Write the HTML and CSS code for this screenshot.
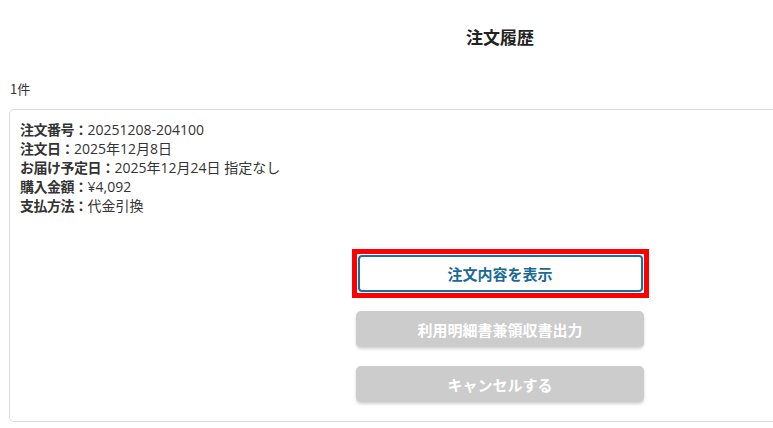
FILE: index.html
```html
<!DOCTYPE html>
<html lang="ja">
<head>
<meta charset="utf-8">
<title>注文履歴</title>
<link rel="stylesheet" href="styles.css">
</head>
<body>
<div class="page">
  <h1 class="title">注文履歴</h1>
  <p class="count">1件</p>
  <div class="card">
    <dl class="info">
      <div class="row"><dt>注文番号：</dt><dd>20251208-204100</dd></div>
      <div class="row"><dt>注文日：</dt><dd>2025年12月8日</dd></div>
      <div class="row"><dt>お届け予定日：</dt><dd>2025年12月24日 指定なし</dd></div>
      <div class="row"><dt>購入金額：</dt><dd>¥4,092</dd></div>
      <div class="row"><dt>支払方法：</dt><dd>代金引換</dd></div>
    </dl>
    <div class="actions">
      <div class="highlight">
        <button class="btn btn-primary">注文内容を表示</button>
      </div>
      <button class="btn btn-disabled">利用明細書兼領収書出力</button>
      <button class="btn btn-disabled">キャンセルする</button>
    </div>
  </div>
</div>
</body>
</html>
```

FILE: styles.css
```css
html, body {
  margin: 0;
  padding: 0;
  background: #fff;
  overflow: hidden;
}
body {
  font-family: "Noto Sans CJK JP", "Noto Sans", sans-serif;
  color: #333;
}
.page {
  width: 982px;
  padding: 0 9px;
}
.title {
  margin: 0;
  padding-top: 25px;
  height: 30px;
  text-align: center;
  font-size: 17px;
  line-height: 24px;
  font-weight: bold;
  color: #222;
}
.count {
  margin: 0;
  padding-top: 25px;
  padding-left: 1px;
  font-size: 13px;
  line-height: 18px;
  height: 29px;
}
.card {
  border: 1px solid #ddd;
  border-radius: 5px;
  padding: 10px 10px 19px;
}
.info {
  margin: 0;
  font-size: 14px;
  line-height: 19px;
}
.row {
  display: flex;
}
.row dt {
  font-weight: bold;
  letter-spacing: -0.5px;
}
.row dd {
  margin: 0;
  font-family: "Open Sans", "Noto Sans CJK JP", sans-serif;
}
.actions {
  margin-top: 40px;
  display: flex;
  flex-direction: column;
  align-items: center;
  gap: 19px;
}
.btn {
  width: 288px;
  height: 36px;
  font-family: inherit;
  font-size: 15px;
  font-weight: bold;
  border-radius: 5px;
  padding: 0;
  display: block;
}
.highlight {
  border: 5px solid #f00;
  padding: 1px;
  margin: -6px 0;
}
.btn-primary {
  width: 285px;
  height: 37px;
  background: #fff;
  border: 2px solid #1e6e9e;
  color: #1a6a98;
  border-radius: 4px;
}
.btn-disabled {
  background: #cccccc;
  border: none;
  color: #fff;
  box-shadow: 0 2px 3px rgba(0, 0, 0, 0.18);
}
```
